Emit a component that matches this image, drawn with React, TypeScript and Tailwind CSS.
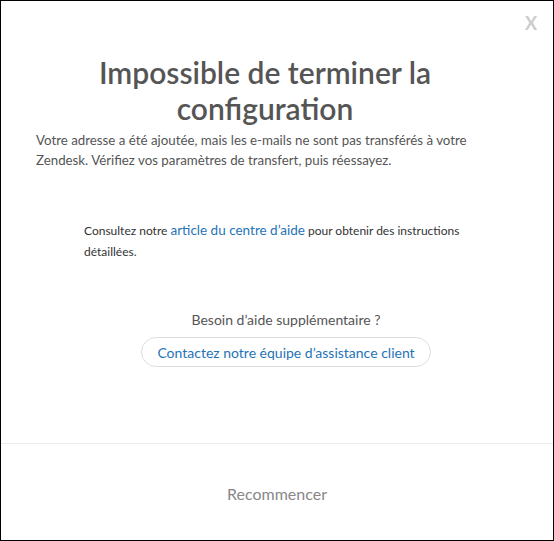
export default function App() {
  return (
    <div className="w-[554px] h-[541px] bg-white border border-black relative flex flex-col font-['Lato',sans-serif] text-[#555]">
      {/* close button */}
      <button className="absolute top-[13px] right-[16px] text-[18px] font-bold leading-none text-[#ccc]">X</button>

      <div className="flex-1 flex flex-col px-[35px] pt-[53px]">
        <h1 className="text-center text-[30px] font-semibold leading-[36px] pl-[40px] pr-[64px]">
          Impossible de terminer la configuration
        </h1>
        <p className="mt-[4px] text-[13.3px] leading-[20px]">
          Votre adresse a été ajoutée, mais les e-mails ne sont pas transférés à votre Zendesk. Vérifiez vos paramètres de transfert, puis réessayez.
        </p>
        <div className="ml-[48px] mr-[30px] flex flex-col">
          <p className="mt-[50px] text-[12px] leading-[21px] text-[#333]">
            Consultez notre <a className="text-[#1f73b7] text-[13.5px] leading-[14px]">article du centre d’aide</a> pour obtenir des instructions détaillées.
          </p>
          <div className="mt-[48px] flex flex-col items-center gap-[7px]">
            <span className="text-[14px] leading-[20px]">Besoin d’aide supplémentaire ?</span>
            <button className="h-[30px] px-[15px] rounded-full border border-[#ddd] text-[14px] text-[#1f73b7]">
              Contactez notre équipe d’assistance client
            </button>
          </div>
        </div>
      </div>

      <div className="h-[97px] border-t border-[#e9ebed] flex items-center justify-center">
        <span className="pt-[4px] text-[16px] text-[#888]">Recommencer</span>
      </div>
    </div>
  );
}
